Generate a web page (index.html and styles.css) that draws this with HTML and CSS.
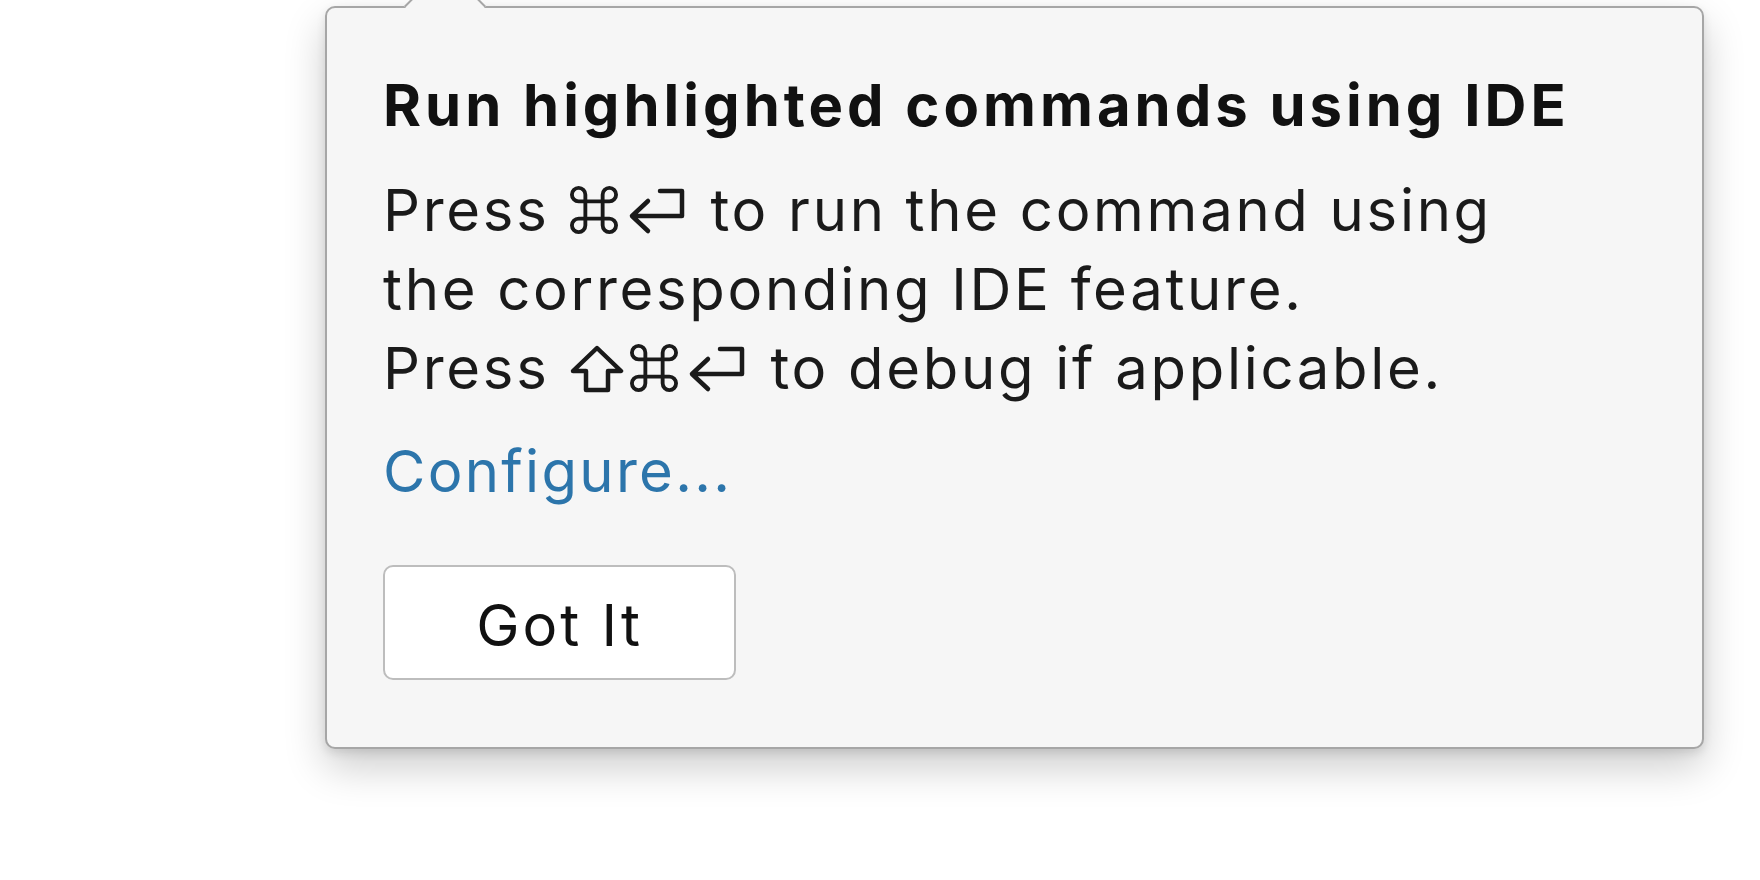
FILE: index.html
```html
<!DOCTYPE html>
<html lang="en">
<head>
<meta charset="utf-8">
<title>Run highlighted commands using IDE</title>
<link rel="stylesheet" href="styles.css">
</head>
<body>
<div class="stage">
  <div class="popup">
    <span class="beak"></span>
    <h1 class="title">Run highlighted commands using IDE</h1>
    <p class="body-text">
      <span class="line">Press <svg class="cmd" viewBox="0 0 50 50" aria-hidden="true"><path d="M16 16 V9 A7 7 0 1 0 9 16 H41 A7 7 0 1 0 34 9 V41 A7 7 0 1 0 41 34 H9 A7 7 0 1 0 16 41 Z"/></svg><svg class="ret" viewBox="0 0 58 50" aria-hidden="true"><path d="M32 4 H54 V29 H4 M20 14 L4 29 L20 44"/></svg> to run the command using</span>
      <span class="line">the corresponding IDE feature.</span>
      <span class="line">Press <svg class="shift" viewBox="0 0 54 48" aria-hidden="true"><path d="M27 3 L51 26 H38 V45 H16 V26 H3 Z"/></svg><svg class="cmd" viewBox="0 0 50 50" aria-hidden="true"><path d="M16 16 V9 A7 7 0 1 0 9 16 H41 A7 7 0 1 0 34 9 V41 A7 7 0 1 0 41 34 H9 A7 7 0 1 0 16 41 Z"/></svg><svg class="ret" viewBox="0 0 58 50" aria-hidden="true"><path d="M32 4 H54 V29 H4 M20 14 L4 29 L20 44"/></svg> to debug if applicable.</span>
    </p>
    <a class="link" href="#">Configure...</a>
    <div class="actions">
      <button class="btn" type="button">Got It</button>
    </div>
  </div>
</div>
</body>
</html>
```
FILE: styles.css
```css
html {
  height: 100%;
  margin: 0;
  padding: 0;
  background: #ffffff;
}

body {
  margin: 0;
  padding: 0;
  min-height: 100%;
  font-family: Inter, "Noto Sans", "DejaVu Sans", sans-serif;
  color: #1a1a1a;
}

.stage {
  box-sizing: border-box;
  min-height: 880px;
  padding: 6px 0 0 325px;
}

.popup {
  position: relative;
  box-sizing: border-box;
  width: 1379px;
  padding: 58px 60px 67px 56px;
  background: #f6f6f6;
  border: 2px solid #a6a6a6;
  border-radius: 10px;
  box-shadow: 0 18px 42px rgba(0, 0, 0, 0.20), 0 4px 10px rgba(0, 0, 0, 0.10);
}

.beak {
  position: absolute;
  left: 89px;
  top: -31px;
  width: 58px;
  height: 58px;
  box-sizing: border-box;
  background: #f6f6f6;
  border-top: 2px solid #a6a6a6;
  border-left: 2px solid #a6a6a6;
  transform: rotate(45deg);
}

.title {
  position: relative;
  margin: 0;
  font-size: 58px;
  line-height: 79px;
  font-weight: 700;
  color: #111111;
  letter-spacing: 4px;
}

.body-text {
  margin: 26px 0 0 0;
  font-size: 58px;
  line-height: 79px;
  font-weight: 400;
  color: #1a1a1a;
  letter-spacing: 2.7px;
}

.line {
  display: block;
  white-space: nowrap;
}

.cmd {
  display: inline-block;
  width: 48px;
  height: 48px;
  vertical-align: -3px;
  margin-left: 2px;
  margin-right: 10px;
  fill: none;
  stroke: #1a1a1a;
  stroke-width: 4;
}

.ret {
  display: inline-block;
  width: 58px;
  height: 50px;
  vertical-align: -6px;
  margin-right: 5px;
  fill: none;
  stroke: #1a1a1a;
  stroke-width: 4.5;
  stroke-linecap: round;
  stroke-linejoin: round;
}

.shift {
  display: inline-block;
  width: 54px;
  height: 48px;
  vertical-align: -4px;
  margin-left: 2px;
  margin-right: 4px;
  fill: none;
  stroke: #1a1a1a;
  stroke-width: 4.5;
  stroke-linejoin: round;
}

.link {
  display: block;
  margin-top: 24px;
  font-size: 58px;
  line-height: 79px;
  color: #2c75ab;
  text-decoration: none;
  letter-spacing: 2.3px;
}

.actions {
  margin-top: 54px;
  display: flex;
}

.btn {
  box-sizing: border-box;
  width: 353px;
  height: 115px;
  padding: 6px 0 0 0;
  background: #ffffff;
  border: 2px solid #bdbdbd;
  border-radius: 10px;
  font-family: Inter, "Noto Sans", sans-serif;
  font-size: 58px;
  line-height: 79px;
  letter-spacing: 3px;
  color: #111111;
  display: flex;
  align-items: center;
  justify-content: center;
}
```
